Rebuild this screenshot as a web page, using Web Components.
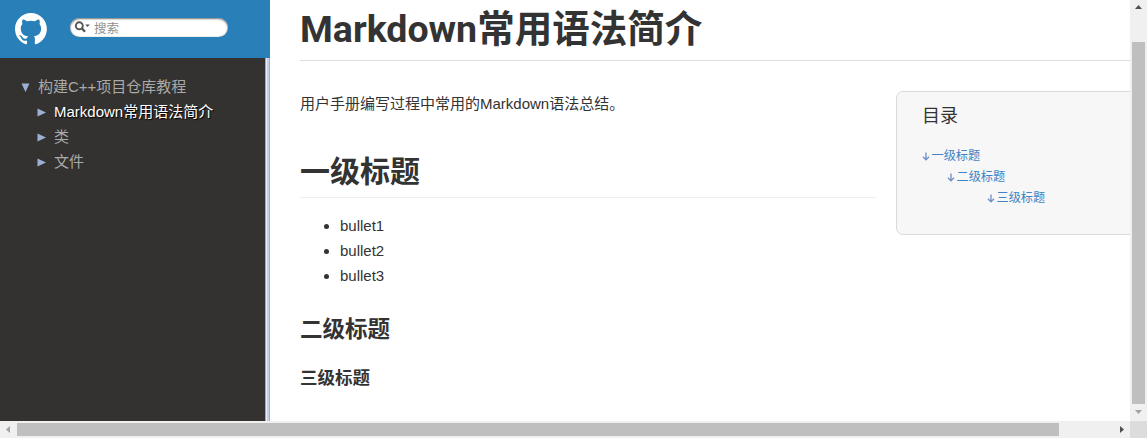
<!DOCTYPE html>
<html lang="zh-CN">
<head>
<meta charset="utf-8">
<title>Markdown常用语法简介</title>
<style>
html,body{margin:0;height:438px;overflow:hidden;background:#fff}
body{font:15px/25px "Liberation Sans","Noto Sans CJK SC",sans-serif;color:#333}
</style>
</head>
<body>
<doc-app></doc-app>
<script>
const define=(name,html)=>customElements.define(name,class extends HTMLElement{
  constructor(){super();this.attachShadow({mode:'open'}).innerHTML=html;}
});

define('site-header',`<style>
:host{display:flex;box-sizing:border-box;height:58px;background:#2980b9;padding:13px 0 0 15px;align-items:flex-start}
.logo{width:32px;height:32px;fill:#fff;flex:none}
.search{display:flex;box-sizing:border-box;align-items:center;width:158px;height:19px;margin:5px 0 0 23px;border-radius:10px;background:#fff;box-shadow:inset 0 1px 2px #777,inset 0 0 1px #999;padding-left:4px;color:#909090;font-size:12.5px;line-height:19px}
.search svg{width:17px;height:13px;margin-right:3px;flex:none}
.search span{position:relative;top:1.5px}
</style>
<svg class="logo" viewBox="0 0 98 98"><path d="M48.854 0C21.839 0 0 22 0 49.217c0 21.756 13.993 40.172 33.405 46.69 2.427.49 3.316-1.059 3.316-2.362 0-1.141-.08-5.052-.08-9.127-13.59 2.934-16.42-5.867-16.42-5.867-2.184-5.704-5.42-7.17-5.42-7.17-4.448-3.015.324-3.015.324-3.015 4.934.326 7.523 5.052 7.523 5.052 4.367 7.496 11.404 5.378 14.235 4.074.404-3.178 1.699-5.378 3.074-6.6-10.839-1.141-22.243-5.378-22.243-24.283 0-5.378 1.94-9.778 5.014-13.2-.485-1.222-2.184-6.275.486-13.038 0 0 4.125-1.304 13.426 5.052a46.97 46.97 0 0 1 12.214-1.63c4.125 0 8.33.571 12.213 1.63 9.302-6.356 13.427-5.052 13.427-5.052 2.67 6.763.97 11.816.485 13.038 3.155 3.422 5.015 7.822 5.015 13.2 0 18.905-11.404 23.06-22.324 24.283 1.78 1.548 3.316 4.481 3.316 9.126 0 6.6-.08 11.897-.08 13.526 0 1.304.89 2.853 3.316 2.364 19.412-6.52 33.405-24.935 33.405-46.691C97.707 22 75.788 0 48.854 0z"/></svg>
<div class="search"><svg viewBox="0 0 17 13"><circle cx="5.3" cy="4.8" r="3.5" fill="none" stroke="#555" stroke-width="1.9"/><path d="M7.8 7.3l3.2 3.5" stroke="#555" stroke-width="2.3"/><path d="M11.2 3.5h4.6l-2.3 2.6z" fill="#555"/></svg><span>搜索</span></div>`);

define('nav-item',`<style>
:host{display:flex;height:25px;line-height:25px;color:#aaa;padding-left:37px;align-items:center}
:host([root]){padding-left:21px}
:host([active]){color:#fff;text-shadow:1px 1px 1px #000}
svg{width:9px;height:9px;fill:#9cafd4;margin:1px 8px 0 0;flex:none}
:host([root]) svg{transform:rotate(90deg)}
</style><svg viewBox="0 0 9 9"><path d="M.5.5L9 4.5.5 8.5z"/></svg><span><slot></slot></span>`);

define('side-nav',`<style>
:host{display:block;width:270px;height:421px;background:#333230;flex:none}
.tree{display:flex;height:363px}
nav{flex:1;padding-top:16px}
.split{width:5px;background:linear-gradient(90deg,#9aa9cc 0 1px,#e8eef9 1px 2px,#c5d0e8 2px 4px,#9cadd0 4px 5px)}
</style><site-header></site-header><div class="tree"><nav>
<nav-item root>构建C++项目仓库教程</nav-item><nav-item active>Markdown常用语法简介</nav-item><nav-item>类</nav-item><nav-item>文件</nav-item>
</nav><div class="split"></div></div>`);

define('toc-link',`<style>
:host{display:flex;align-items:center;height:21px;line-height:21px;font-size:12.2px;color:#4183c4}
svg{width:8px;height:9px;margin:0 2px 0 -.5px;fill:none;stroke:#6f8dc6;stroke-width:1.3}
</style><svg viewBox="0 0 8 9"><path d="M4 .5v7.5M1 4.7l3 3.2 3-3.2"/></svg><span><slot></slot></span>`);

define('page-toc',`<style>
:host{display:block;box-sizing:border-box;width:260px;height:144px;border:1px solid #d8dadb;border-radius:7px;background:#f7f7f7;padding:11px 25px;flex:none;margin:30px 0 0 20px}
h3{font-size:18px;line-height:27px;font-weight:400;margin:0 0 16px}
.l2{padding-left:25px}.l3{padding-left:65px}
</style><h3>目录</h3><toc-link>一级标题</toc-link><toc-link class="l2">二级标题</toc-link><toc-link class="l3">三级标题</toc-link>`);

define('doc-content',`<style>
:host{display:block;flex:1;min-width:0;height:421px;overflow:hidden;padding-left:30px}
h1,h2,h3{margin:0;font-family:Roboto,"Noto Sans CJK SC",sans-serif;font-weight:700}
.title{box-sizing:border-box;height:61px;border-bottom:1px solid #ddd;font-size:37.5px;line-height:58px}
.cols{display:flex;align-items:flex-start;width:836px}
article{flex:none;width:576px}
p{margin:30px 0 0}
.sec{box-sizing:border-box;height:52px;margin-top:30px;font-size:30px;line-height:51px;border-bottom:1px solid #eee}
ul{margin:15px 0 0;padding-left:40px}
h2{font-size:22.5px;line-height:34px;margin-top:24px}
h3{font-size:17.5px;line-height:27px;margin-top:19px}
</style><h1 class="title">Markdown常用语法简介</h1><div class="cols"><article>
<p>用户手册编写过程中常用的Markdown语法总结。</p><h1 class="sec">一级标题</h1>
<ul><li>bullet1</li><li>bullet2</li><li>bullet3</li></ul><h2>二级标题</h2><h3>三级标题</h3></article><page-toc></page-toc></div>`);

define('scroll-bar',`<style>
:host{display:flex;background:#f0f0f0;box-sizing:border-box;align-items:center}
:host([vertical]){width:17px;height:421px;flex:none;flex-direction:column}
:host(:not([vertical])){width:1130px;height:17px}
.thumb{background:#bfbfbf}
:host([vertical]) .thumb{width:13px;height:362px;margin-top:25px}
:host(:not([vertical])) .thumb{height:13px;width:1042px}
svg{width:17px;height:17px;flex:none}
.rt{margin-left:auto}
.a{fill:#505050}.b{fill:#a3a3a3}
.up,.dn,.lf,.rt{display:none}
:host([vertical]) .up,:host([vertical]) .dn,:host(:not([vertical])) .lf,:host(:not([vertical])) .rt{display:block}
</style><svg class="up a" viewBox="0 0 17 17"><path d="M5 9l3.5-4L12 9z"/></svg><svg class="lf b" viewBox="0 0 17 17"><path d="M10 5v7L6 8.5z"/></svg><div class="thumb"></div><svg class="dn b" viewBox="0 0 17 17"><path d="M5 6h7L8.5 10z"/></svg><svg class="rt a" viewBox="0 0 17 17"><path d="M7 5v7l4-3.5z"/></svg>`);

define('doc-app',`<style>
:host{display:block;width:1147px;height:438px;overflow:hidden}
.row{display:flex}
.corner{width:17px;height:17px;background:#dcdcdc}
</style><div class="row"><side-nav></side-nav><doc-content></doc-content><scroll-bar vertical></scroll-bar></div><div class="row"><scroll-bar></scroll-bar><div class="corner"></div></div>`);
</script>
</body>
</html>
